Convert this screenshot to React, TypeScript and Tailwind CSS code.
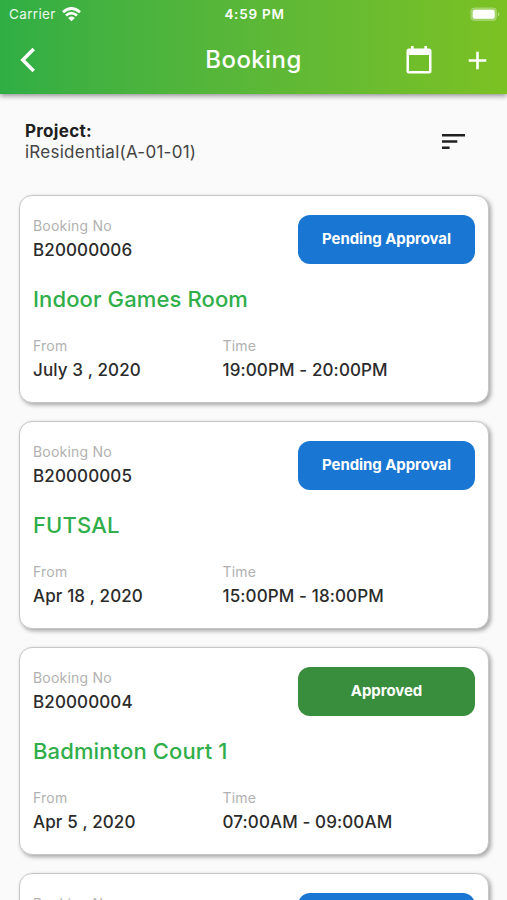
type Booking = {
  no: string;
  place: string;
  date: string;
  time: string;
  status: "Pending Approval" | "Approved";
};

const bookings: Booking[] = [
  { no: "B20000006", place: "Indoor Games Room", date: "July 3 , 2020", time: "19:00PM - 20:00PM", status: "Pending Approval" },
  { no: "B20000005", place: "FUTSAL", date: "Apr 18 , 2020", time: "15:00PM - 18:00PM", status: "Pending Approval" },
  { no: "B20000004", place: "Badminton Court 1", date: "Apr 5 , 2020", time: "07:00AM - 09:00AM", status: "Approved" },
  { no: "B20000003", place: "FUTSAL", date: "Apr 4 , 2020", time: "15:00PM - 18:00PM", status: "Pending Approval" },
];

function StatusBar() {
  return (
    <div className="grid h-7 grid-cols-3 items-center pl-[9px] pr-[7px] text-[13.5px] leading-7">
      <div className="flex items-center gap-[6px]">
        <span className="tracking-[0.35px] text-white/90">Carrier</span>
        <svg width="19" height="15" viewBox="0 0 19 15" fill="none" stroke="white" strokeWidth="2.7">
          <path d="M1 5.3Q9.500 -2.300 18 5.300" />
          <path d="M4 8.600Q9.500 3.700 15 8.600" />
          <path d="M9.500 14.300L6.200 10.900Q9.500 8.300 12.800 10.900Z" fill="white" stroke="none" />
        </svg>
      </div>
      <span className="whitespace-nowrap text-center font-semibold tracking-[0.75px]">4:59 PM</span>
      <svg className="justify-self-end" width="30" height="15" viewBox="0 0 30 15">
        <rect x="0.700" y="0.700" width="26" height="13" rx="4" fill="white" fillOpacity="0.300" stroke="white" strokeOpacity="0.150" />
        <rect x="2.700" y="2.800" width="22" height="9" rx="2.300" fill="white" />
        <path d="M28 5Q30.500 7.200 28 9.500Z" fill="white" fillOpacity="0.450" />
      </svg>
    </div>
  );
}

function Header() {
  return (
    <header className="h-[94px] shrink-0 bg-linear-to-r from-[#2fae44] to-[#7bc122] text-white shadow-[0_2px_5px_rgba(0,0,0,0.42)]">
      <StatusBar />
      <div className="grid h-16 grid-cols-[1fr_auto_1fr] items-center pl-5 pr-5">
        <svg width="16" height="26" viewBox="0 0 16 26" fill="none" stroke="white" strokeWidth="3.500">
          <path d="M13.700 2L2.800 13L13.700 24" />
        </svg>
        <h1 className="text-2xl font-medium tracking-[0.4px]">Booking</h1>
        <div className="flex items-center justify-end gap-[36px]">
          <svg width="26" height="28" viewBox="0 0 26 28">
            <path
              fill="white"
              fillRule="evenodd"
              d="M5 0H7.600V2.500H18.400V0H21V2.500H23Q25.500 2.500 25.500 5V25Q25.500 27.500 23 27.500H3Q.500 27.500 .500 25V5Q.500 2.500 3 2.500H5ZM3 9V25H23V9Z"
            />
          </svg>
          <svg width="19" height="19" viewBox="0 0 19 19" stroke="white" strokeWidth="2.600">
            <path d="M.700 9.500H18.300M9.500 .700V18.300" />
          </svg>
        </div>
      </div>
    </header>
  );
}

function Field({ label, value }: { label: string; value: string }) {
  return (
    <div>
      <p className="text-sm leading-5 tracking-[0.2px] text-[#b1b1b1]">{label}</p>
      <p className="pt-[2px] text-[17px] font-medium leading-6 tracking-[0.12px] text-[#2b2b2b]">{value}</p>
    </div>
  );
}

function BookingCard({ booking }: { booking: Booking }) {
  const color = booking.status === "Approved" ? "bg-[#388e3c]" : "bg-[#1976d2]";
  return (
    <article className="h-[208px] shrink-0 rounded-[13px] border-[1.5px] border-[#c6c6c6] bg-white px-[13px] pt-[19px] shadow-[2px_2px_4px_rgba(0,0,0,0.34)]">
      <div className="flex justify-between">
        <div className="pt-px">
          <Field label="Booking No" value={booking.no} />
        </div>
        <div className={"flex h-[49px] w-[177px] items-center justify-center rounded-[12px] text-[15px] font-bold tracking-[-0.08px] text-white " + color}>
          {booking.status}
        </div>
      </div>
      <h2 className="mt-[19px] text-[22px] font-medium leading-8 tracking-[0.12px] text-[#2fae4a]">{booking.place}</h2>
      <div className="mt-[21px] grid grid-cols-[189.500px_1fr]">
        <Field label="From" value={booking.date} />
        <Field label="Time" value={booking.time} />
      </div>
    </article>
  );
}

export default function App() {
  return (
    <div className="flex h-[900px] w-[507px] flex-col overflow-hidden bg-[#fafafa] font-['Inter','Liberation_Sans',sans-serif]">
      <Header />
      <section className="flex h-[101px] shrink-0 items-start justify-between pl-[25px] pr-[42px] pt-[27px]">
        <div className="text-[17px] leading-[21px]">
          <p className="font-bold tracking-[0.3px] text-[#202020]">Project:</p>
          <p className="tracking-[0.25px] text-[#444]">iResidential(A-01-01)</p>
        </div>
        <svg className="mt-[12px]" width="23" height="17" viewBox="0 0 23 17" fill="#202020">
          <path d="M0 1H23V3.500H0ZM0 7.200H15.300V9.700H0ZM0 13.400H7.600V15.900H0Z" />
        </svg>
      </section>
      <main className="flex flex-col gap-[18px] pl-[19px] pr-[18px]">
        {bookings.map((booking) => (
          <BookingCard key={booking.no} booking={booking} />
        ))}
      </main>
    </div>
  );
}
